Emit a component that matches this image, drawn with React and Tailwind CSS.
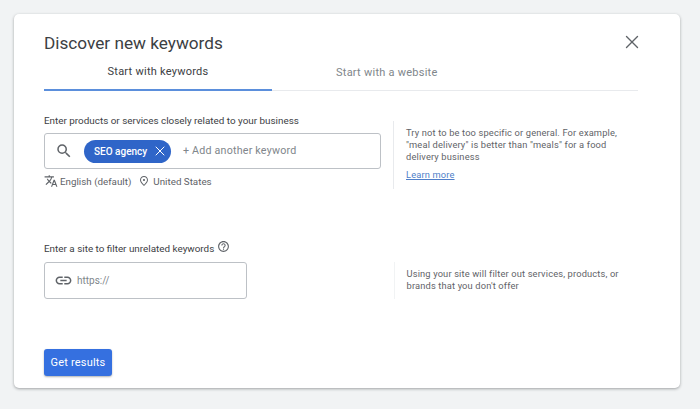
import React from "react";
import { X } from "lucide-react";
import { MdSearch, MdTranslate, MdOutlinePlace, MdLink, MdHelpOutline } from "react-icons/md";

export default function App() {
  return (
    <div className="w-[700px] h-[409px] overflow-hidden bg-[#f1f3f4] pt-[14px] pl-[14px] font-['Roboto',sans-serif]">
      <div className="w-[666px] h-[374px] bg-white rounded-[5px] shadow-[0_1px_3px_rgba(60,64,67,0.45)] pt-[18px] pl-[30px] pr-[42px]">
        {/* Header */}
        <div className="flex items-center justify-between h-[22px]">
          <h1 className="text-[17.2px] leading-[22px] text-[#3c4043]">Discover new keywords</h1>
          <X className="w-[22px] h-[22px] -mr-[5px] mb-[3px] text-[#5f6368]" strokeWidth={1.5} />
        </div>

        {/* Tabs */}
        <div className="flex h-[35px] mt-[2px] border-b border-[#e8eaed] text-[11px] tracking-[0.25px]">
          <div className="w-[228px] h-[35px] flex items-center justify-center border-b-2 border-[#5b8fdc] text-[#3c4043]">
            Start with keywords
          </div>
          <div className="w-[165px] h-[34px] pl-[64px] flex items-center whitespace-nowrap text-[#80868b]">
            Start with a website
          </div>
        </div>

        {/* Keywords row */}
        <div className="flex mt-[23px] h-[75px]">
          <div className="w-[337px]">
            <label className="block text-[9.9px] leading-[13px] text-[#3c4043]">
              Enter products or services closely related to your business
            </label>
            <div className="flex items-center h-[36px] mt-[6px] border border-[#bdc1c6] rounded-[3px] pl-[10px]">
              <MdSearch className="w-[18px] h-[18px] text-[#5f6368]" />
              <span className="flex items-center h-[23px] w-[87px] ml-[11px] pl-[10px] rounded-full bg-[#2f65c8] text-white text-[10px] font-medium">
                SEO agency
                <X className="w-[16px] h-[16px] ml-[5px]" strokeWidth={1.5} />
              </span>
              <span className="ml-[12px] pt-px text-[10.7px] tracking-[0.2px] text-[#80868b]">+ Add another keyword</span>
            </div>
            <div className="flex items-center mt-[5px] text-[9.8px] leading-[13px] text-[#5f6368]">
              <MdTranslate className="w-[14px] h-[14px] mr-[2px]" />
              <span>English (default)</span>
              <MdOutlinePlace className="w-[12px] h-[12px] ml-[7px] mr-[3px]" />
              <span>United States</span>
            </div>
          </div>
          <div className="mt-[7px] h-[68px] ml-[12px] pl-[12px] border-l border-[#e8eaed] w-[245px] text-[9.3px] leading-[12.2px] tracking-[0.15px] text-[#5f6368]">
            <p className="mt-[6px]">
              Try not to be too specific or general. For example, "meal delivery" is better than "meals" for a food delivery business
            </p>
            <a className="block mt-[5px] text-[#4f7fc9] underline">Learn more</a>
          </div>
        </div>

        {/* Site row */}
        <div className="flex mt-[53px] h-[57px] items-end">
          <div className="w-[203px]">
            <label className="flex items-center whitespace-nowrap text-[9.9px] leading-[13px] text-[#3c4043]">
              Enter a site to filter unrelated keywords
              <MdHelpOutline className="w-[13px] h-[13px] ml-[3px] mb-[4px] text-[#5f6368]" />
            </label>
            <div className="flex items-center h-[37px] mt-[5px] border border-[#bdc1c6] rounded-[3px] pl-[9px]">
              <MdLink className="w-[19px] h-[19px] text-[#5f6368]" />
              <span className="ml-[4px] text-[10px] text-[#80868b]">https://</span>
            </div>
          </div>
          <div className="ml-[147px] pl-[12px] h-[37px] border-l border-[#f1f3f4] w-[245px] text-[9.3px] leading-[12px] tracking-[0.15px] text-[#5f6368]">
            <p className="mt-[6px]">Using your site will filter out services, products, or brands that you don't offer</p>
          </div>
        </div>

        <button className="block mt-[50px] w-[68px] h-[27px] pt-px rounded-[3px] bg-[#3570e0] text-white text-[11px] tracking-[0.2px] shadow-[0_1px_2px_rgba(60,64,67,0.4)]">
          Get results
        </button>
      </div>
    </div>
  );
}
